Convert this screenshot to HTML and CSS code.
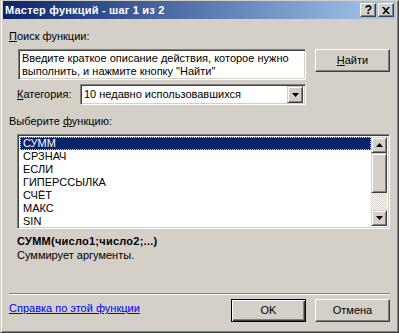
FILE: index.html
```html
<!DOCTYPE html>
<html lang="ru">
<head>
<meta charset="utf-8">
<title>Мастер функций</title>
<link rel="stylesheet" href="styles.css">
</head>
<body>
<div class="window">
  <div class="titlebar">
    <span class="title">Мастер функций - шаг 1 из 2</span>
    <div class="tb-buttons">
      <span class="tbtn help">?</span>
      <span class="tbtn close"><svg width="8" height="7" viewBox="0 0 8 7"><path d="M0 0h2l2 2.2L6 0h2L5 3.5 8 7H6L4 4.8 2 7H0l3-3.5z" fill="#000"/></svg></span>
    </div>
  </div>
  <div class="content">
    <div class="label l-search"><u>П</u>оиск функции:</div>
    <div class="search-row">
      <div class="field search-box">Введите краткое описание действия, которое нужно<br>выполнить, и нажмите кнопку "Найти"</div>
      <div class="btn find"><span><u>Н</u>айти</span></div>
    </div>
    <div class="cat-row">
      <span class="cat-label"><u>К</u>атегория:</span>
      <div class="field combo">
        <span class="combo-text">10 недавно использовавшихся</span>
        <span class="raised dd-btn"><svg width="7" height="4" viewBox="0 0 7 4"><path d="M0 0h7L3.5 4z" fill="#000"/></svg></span>
      </div>
    </div>
    <div class="label l-choose">Выберите <u>ф</u>ункцию:</div>
    <div class="field listbox">
      <ul class="items">
        <li class="item selected">СУММ</li>
        <li class="item">СРЗНАЧ</li>
        <li class="item">ЕСЛИ</li>
        <li class="item">ГИПЕРССЫЛКА</li>
        <li class="item">СЧЁТ</li>
        <li class="item">МАКС</li>
        <li class="item">SIN</li>
      </ul>
      <div class="scrollbar">
        <span class="raised sb-btn"><svg width="7" height="4" viewBox="0 0 7 4"><path d="M3.5 0L7 4H0z" fill="#000"/></svg></span>
        <span class="raised sb-thumb"></span>
        <span class="sb-track"></span>
        <span class="raised sb-btn"><svg width="7" height="4" viewBox="0 0 7 4"><path d="M0 0h7L3.5 4z" fill="#000"/></svg></span>
      </div>
    </div>
    <div class="syntax">СУММ(число1;число2;...)</div>
    <div class="desc">Суммирует аргументы.</div>
    <div class="sep"></div>
    <div class="bottom-row">
      <a class="link" href="#">Справка по этой функции</a>
      <div class="btns">
        <div class="btn default"><span>OK</span></div>
        <div class="btn"><span>Отмена</span></div>
      </div>
    </div>
  </div>
</div>
</body>
</html>
```

FILE: styles.css
```css
html, body {
  margin: 0;
  padding: 0;
  background: #D4D0C8;
}
body {
  font-family: "Liberation Sans", Arial, sans-serif;
  font-size: 11px;
  line-height: 13px;
  color: #000;
}
.window {
  box-sizing: border-box;
  width: 399px;
  height: 333px;
  border: 1px solid;
  border-color: #D4D0C8 #404040 #404040 #D4D0C8;
  border-top-width: 1px;
  padding: 0 2px 2px 2px;
  box-shadow: inset 1px 0 #fff, inset -1px -1px #808080;
  background: #D4D0C8;
  overflow: hidden;
}
.titlebar {
  height: 18px;
  display: flex;
  align-items: center;
  justify-content: space-between;
  background: linear-gradient(to right, #0A246A, #A6CAF0);
}
.title {
  color: #fff;
  font-weight: bold;
  padding-left: 2px;
  letter-spacing: 0.2px;
  white-space: nowrap;
}
.tb-buttons {
  display: flex;
  gap: 2px;
  margin-right: 2px;
}
.tbtn {
  box-sizing: border-box;
  width: 16px;
  height: 14px;
  border: 1px solid;
  border-color: #fff #404040 #404040 #fff;
  box-shadow: inset -1px -1px #808080;
  background: #D4D0C8;
  display: flex;
  align-items: center;
  justify-content: center;
  font-weight: bold;
  font-size: 12px;
  line-height: 12px;
}
.tbtn.help {
  padding-left: 1px;
}
.content {
  padding: 0 6px;
}
u {
  text-decoration: underline;
  text-underline-offset: 1px;
}
.label {
  white-space: nowrap;
}
.l-search {
  margin-top: 11px;
}
.search-row {
  display: flex;
  align-items: flex-start;
  margin-top: 6px;
}
.field {
  box-sizing: border-box;
  background: #fff;
  border: 1px solid;
  border-color: #808080 #fff #fff #808080;
  box-shadow: inset 1px 1px #404040, inset -1px -1px #D4D0C8;
}
.search-box {
  margin-left: 9px;
  width: 288px;
  height: 31px;
  padding: 2px 3px;
  white-space: nowrap;
}
.btn {
  box-sizing: border-box;
  width: 75px;
  height: 23px;
  border: 1px solid;
  border-color: #fff #404040 #404040 #fff;
  box-shadow: inset -1px -1px #808080;
  background: #D4D0C8;
  display: flex;
  align-items: center;
  justify-content: center;
}
.btn.default {
  border-color: #000;
  box-shadow: inset 1px 1px #fff, inset -1px -1px #404040, inset -2px -2px #808080;
}
.find {
  margin-left: 9px;
}
.cat-row {
  display: flex;
  align-items: center;
  margin-top: 4px;
  height: 21px;
}
.cat-label {
  margin-left: 8px;
  width: 63px;
  white-space: nowrap;
}
.combo {
  width: 226px;
  height: 21px;
  display: flex;
  align-items: center;
  justify-content: space-between;
  padding: 2px;
}
.combo-text {
  padding-left: 1px;
  white-space: nowrap;
}
.raised {
  box-sizing: border-box;
  border: 1px solid;
  border-color: #D4D0C8 #404040 #404040 #D4D0C8;
  box-shadow: inset 1px 1px #fff, inset -1px -1px #808080;
  background: #D4D0C8;
  display: flex;
  align-items: center;
  justify-content: center;
}
.dd-btn {
  width: 16px;
  height: 17px;
}
.l-choose {
  margin-top: 10px;
}
.listbox {
  margin-top: 6px;
  margin-left: 8px;
  width: 373px;
  height: 95px;
  padding: 2px;
  display: flex;
}
.items {
  list-style: none;
  margin: 0;
  padding: 0;
  flex: 1;
}
.item {
  height: 13px;
  line-height: 13px;
  padding-left: 3px;
  white-space: nowrap;
}
.item.selected {
  background: #0A246A;
  color: #fff;
  outline: 1px dotted #C8C8C8;
  outline-offset: -1px;
}
.scrollbar {
  width: 16px;
  display: flex;
  flex-direction: column;
}
.sb-btn {
  width: 16px;
  height: 16px;
}
.sb-thumb {
  width: 16px;
  height: 40px;
}
.sb-track {
  flex: 1;
  background: repeating-conic-gradient(#fff 0 25%, #D4D0C8 0 50%) 0 0 / 2px 2px;
}
.syntax {
  margin-top: 6px;
  margin-left: 8px;
  font-weight: bold;
  letter-spacing: 0.25px;
  white-space: nowrap;
}
.desc {
  margin-left: 8px;
  margin-top: 1px;
  white-space: nowrap;
}
.sep {
  margin-top: 31px;
  height: 0;
  border-top: 1px solid #808080;
  border-bottom: 1px solid #fff;
}
.bottom-row {
  display: flex;
  justify-content: space-between;
  align-items: flex-start;
  margin-top: 4px;
}
.link {
  color: #0000FF;
  text-decoration: underline;
  margin-top: 3px;
  white-space: nowrap;
}
.btns {
  display: flex;
  gap: 9px;
}
```
